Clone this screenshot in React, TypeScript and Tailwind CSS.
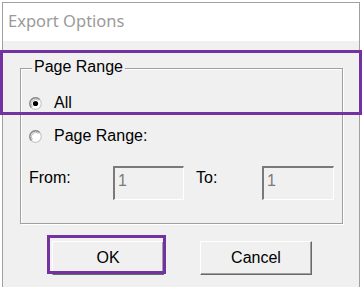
import React from "react";

function Radio({ checked }: { checked?: boolean }) {
  return (
    <svg width="13" height="13" viewBox="0 0 13 13" className="block">
      <circle cx="6.5" cy="6.5" r="5.8" fill="#ffffff" stroke="#c8c8c8" strokeWidth="1.2" />
      <path d="M10.6 2.4 A5.8 5.8 0 0 0 2.4 10.6" fill="none" stroke="#8a8a8a" strokeWidth="1.4" />
      <path d="M9.6 3.4 A4.4 4.4 0 0 0 3.4 9.6" fill="none" stroke="#b5b5b5" strokeWidth="1" />
      {checked && <circle cx="6.5" cy="6.5" r="2.6" fill="#000000" />}
    </svg>
  );
}

export default function App() {
  const font = { fontFamily: '"Liberation Sans", Arial, sans-serif' };
  return (
    <div className="relative w-[362px] h-[287px] bg-white overflow-hidden" style={font}>
      <div className="ml-[2px] mt-[2px] w-[358px] h-[285px] border-l border-t border-r border-[#a0a0a0] flex flex-col">
        <div
          className="h-[38px] bg-white pl-[5px] pt-[7px] text-[16.5px] leading-[22px] text-[#9a9a9a]"
          style={{ fontFamily: '"Noto Sans", "Open Sans", sans-serif' }}
        >
          Export Options
        </div>
        <div className="flex-1 bg-[#f0f0f0] flex flex-col text-[16px] leading-[18px] text-black">
          <div className="relative ml-[17px] mt-[27px] w-[323px] h-[156px] border border-[#a0a0a0] shadow-[inset_1px_1px_0_#ffffff,1px_1px_0_#ffffff]">
            <span className="absolute left-[11px] top-[-11px] px-[2px] bg-[#f0f0f0]">Page Range</span>
            <div className="flex flex-col pl-[8px]">
              <div className="mt-[25px] h-[18px] flex items-center gap-[12px]">
                <Radio checked />
                <span>All</span>
              </div>
              <div className="mt-[15px] h-[18px] flex items-center gap-[12px]">
                <Radio />
                <span>Page Range:</span>
              </div>
              <div className="mt-[21px] flex items-start">
                <span className="mt-[3px] w-[84px]">From:</span>
                <div className="w-[71px] h-[34px] border-t-2 border-l-2 border-t-[#7a7a7a] border-l-[#7a7a7a] border-r border-b border-r-white border-b-white pl-[3px] pt-[4px] text-[#7a7a7a]">
                  1
                </div>
                <span className="mt-[3px] ml-[12px] w-[66px]">To:</span>
                <div className="w-[72px] h-[34px] border-t-2 border-l-2 border-t-[#7a7a7a] border-l-[#7a7a7a] border-r border-b border-r-white border-b-white pl-[3px] pt-[4px] text-[#7a7a7a]">
                  1
                </div>
              </div>
            </div>
          </div>
          <div className="flex mt-[17px] ml-[49px] gap-[36px]">
            <button className="w-[112px] h-[34px] bg-[#f0f0f0] border-t border-l border-t-white border-l-white border-b border-r border-b-[#696969] border-r-[#696969] shadow-[inset_-1px_-1px_0_#a0a0a0] text-[16px] leading-[18px] text-black">
              OK
            </button>
            <button className="w-[112px] h-[34px] bg-[#f0f0f0] border-t border-l border-t-white border-l-white border-b border-r border-b-[#696969] border-r-[#696969] shadow-[inset_-1px_-1px_0_#a0a0a0] text-[16px] leading-[18px] text-black">
              Cancel
            </button>
          </div>
        </div>
      </div>
      <div className="absolute left-0 top-[50px] w-[362px] h-[65px] border-[3px] border-[#7232a0] pointer-events-none" />
      <div className="absolute left-[47px] top-[235px] w-[119px] h-[39px] border-[3px] border-[#7232a0] pointer-events-none" />
    </div>
  );
}
